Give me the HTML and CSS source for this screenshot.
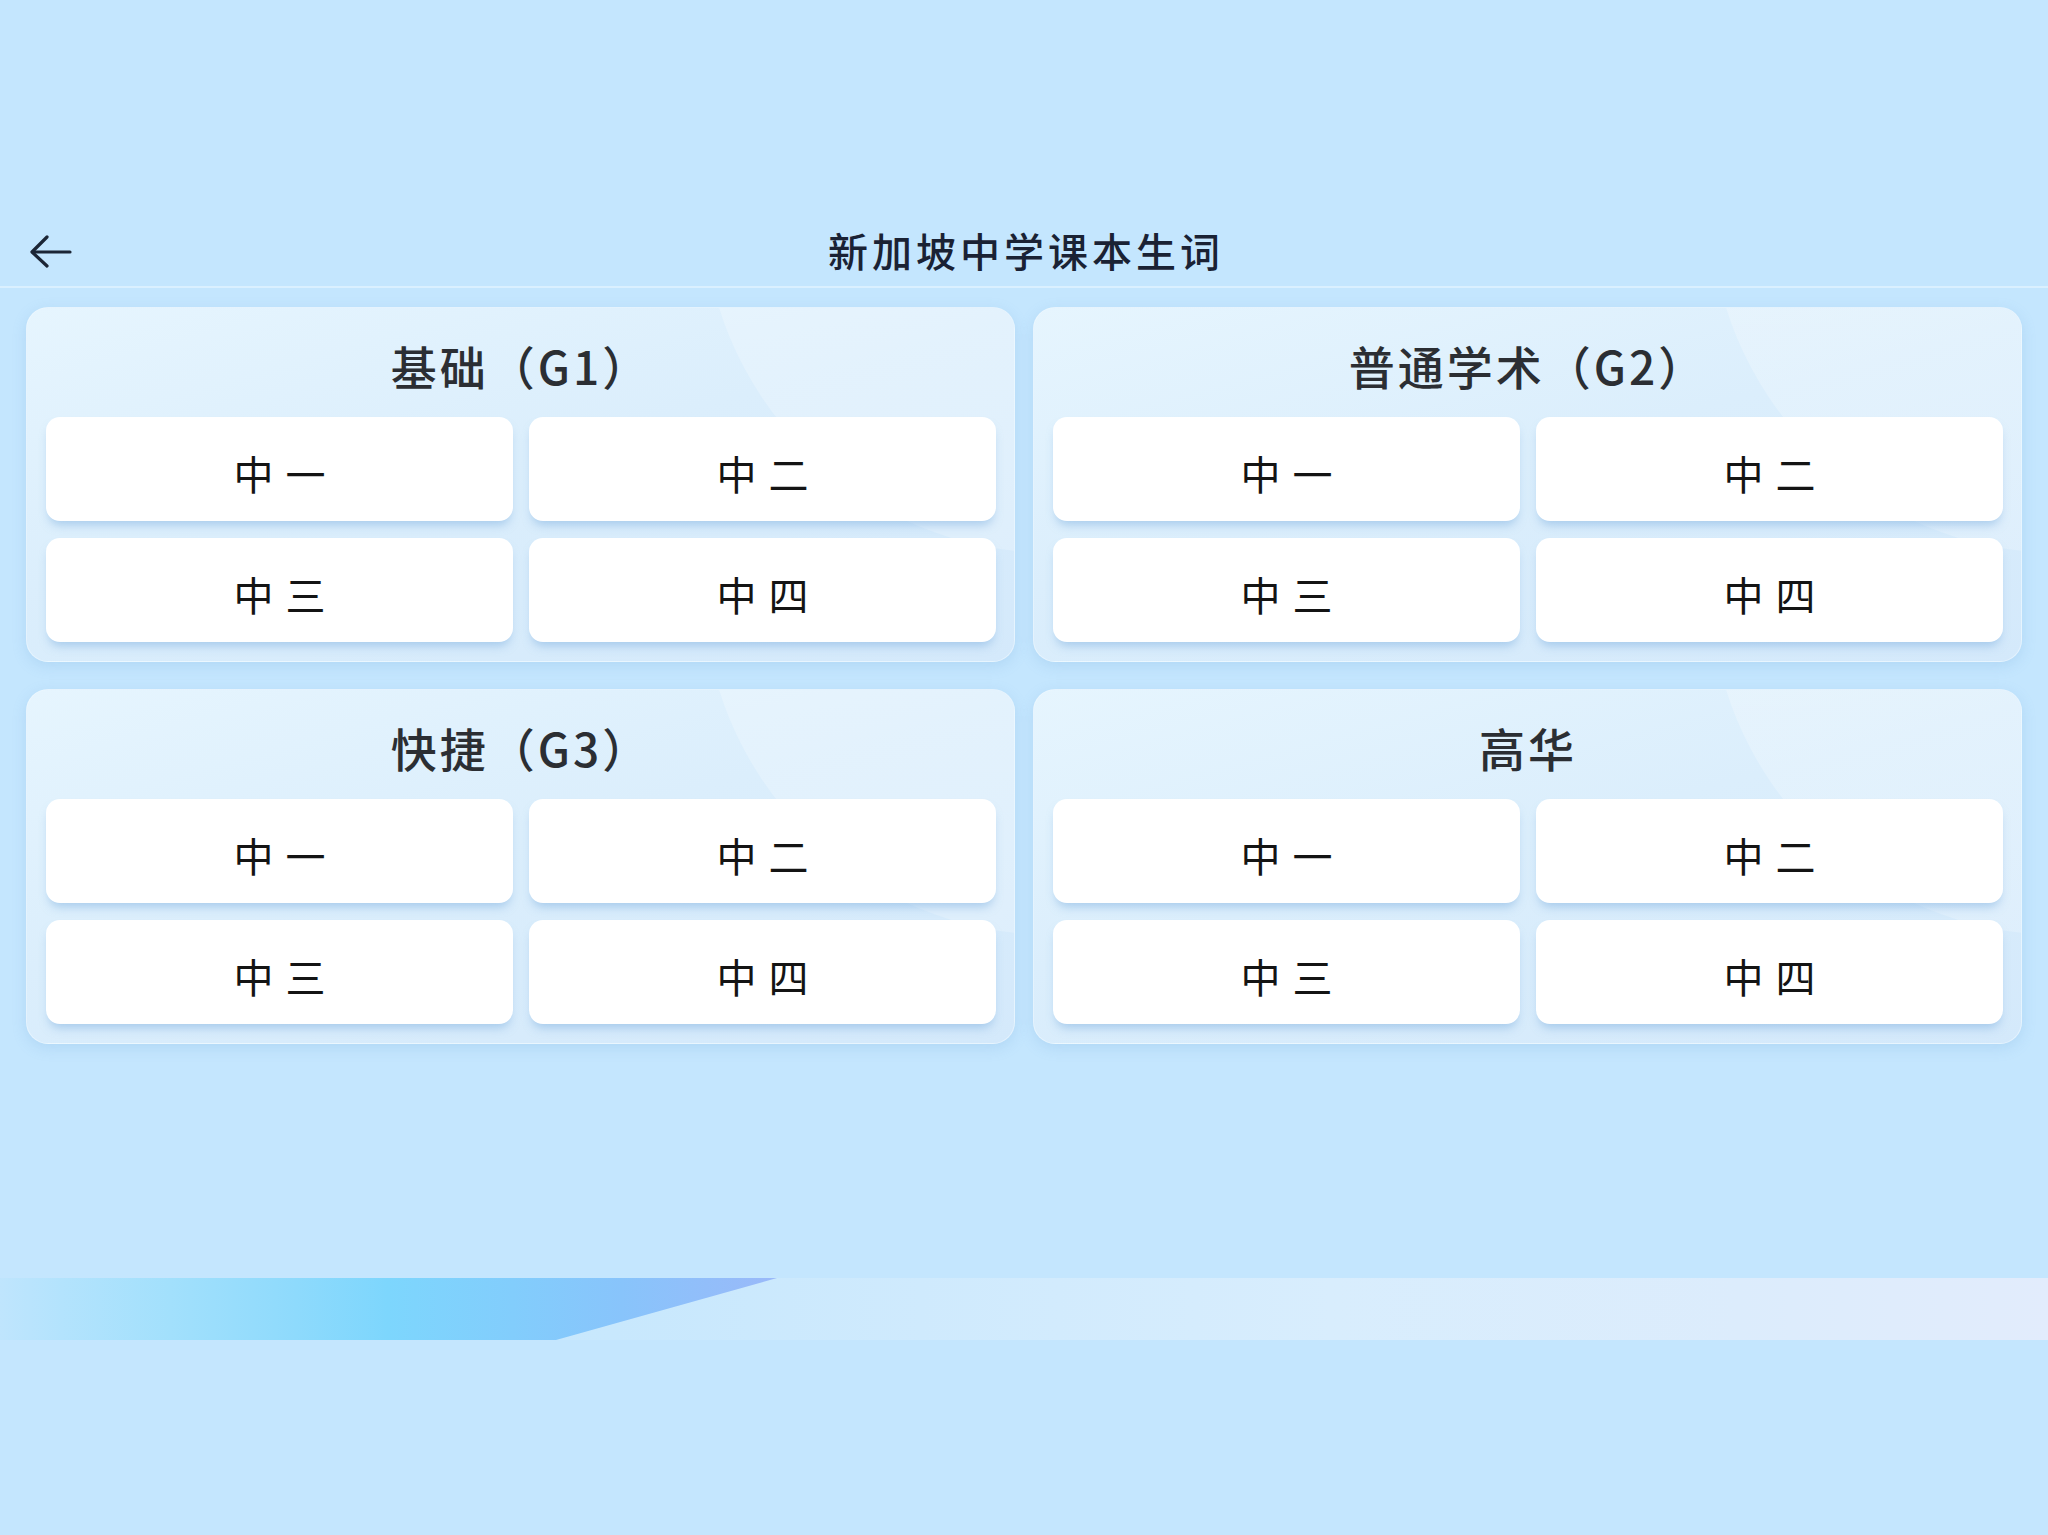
FILE: index.html
```html
<!DOCTYPE html>
<html lang="zh-CN">
<head>
<meta charset="utf-8">
<title>新加坡中学课本生词</title>
<link rel="stylesheet" href="styles.css">
</head>
<body>
<div class="page">
  <div class="topspace"></div>
  <header class="header">
    <div class="back">
      <svg class="back-icon" width="44" height="36" viewBox="0 0 44 36" fill="none" stroke="#1c2636" stroke-width="3.2" stroke-linecap="round" stroke-linejoin="round">
        <path d="M41 18 H4"/>
        <path d="M18 3 L3 18 L18 32"/>
      </svg>
    </div>
    <h1 class="title">新加坡中学课本生词</h1>
    <div class="spacer"></div>
  </header>

  <main class="grid">
    <section class="card">
      <h2 class="card-title">基础（G1）</h2>
      <div class="buttons">
        <div class="btn">中一</div>
        <div class="btn">中二</div>
        <div class="btn">中三</div>
        <div class="btn">中四</div>
      </div>
    </section>
    <section class="card">
      <h2 class="card-title">普通学术（G2）</h2>
      <div class="buttons">
        <div class="btn">中一</div>
        <div class="btn">中二</div>
        <div class="btn">中三</div>
        <div class="btn">中四</div>
      </div>
    </section>
    <section class="card">
      <h2 class="card-title">快捷（G3）</h2>
      <div class="buttons">
        <div class="btn">中一</div>
        <div class="btn">中二</div>
        <div class="btn">中三</div>
        <div class="btn">中四</div>
      </div>
    </section>
    <section class="card">
      <h2 class="card-title">高华</h2>
      <div class="buttons">
        <div class="btn">中一</div>
        <div class="btn">中二</div>
        <div class="btn">中三</div>
        <div class="btn">中四</div>
      </div>
    </section>
  </main>

  <div class="banner">
    <div class="banner-fill"></div>
  </div>
</div>
</body>
</html>
```

FILE: styles.css
```css
* { box-sizing: border-box; }

html, body {
  margin: 0;
  padding: 0;
}

body {
  width: 2048px;
  height: 1535px;
  overflow: hidden;
  background: #c4e6fe;
  font-family: "Noto Sans CJK SC", "Noto Sans", sans-serif;
  color: #1c2636;
}

.page {
  display: flex;
  flex-direction: column;
}

.topspace {
  height: 218px;
}

.header {
  height: 70px;
  display: grid;
  grid-template-columns: 200px 1fr 200px;
  align-items: center;
  border-bottom: 2px solid rgba(225, 243, 255, 0.75);
}

.back {
  display: flex;
  align-items: center;
  padding-left: 29px;
}

.back-icon {
  display: block;
}

.title {
  margin: 0;
  text-align: center;
  font-size: 40px;
  font-weight: 500;
  letter-spacing: 4px;
  padding-left: 4px;
  padding-bottom: 4px;
  line-height: 1;
  color: #1a2234;
}

.grid {
  display: grid;
  grid-template-columns: 1fr 1fr;
  column-gap: 18px;
  row-gap: 27px;
  padding: 19px 26px 0;
}

.card {
  position: relative;
  overflow: hidden;
  height: 355px;
  border-radius: 22px;
  padding: 0 18px 19px 19px;
  display: flex;
  flex-direction: column;
  background: linear-gradient(165deg, #e6f5fe 0%, #dbeefc 45%, #d4e9fb 100%);
  border: 1.5px solid rgba(240, 249, 255, 0.55);
  box-shadow: 0 4px 14px rgba(110, 165, 215, 0.22);
}

.card::before {
  content: "";
  position: absolute;
  left: 676px;
  top: -455px;
  width: 700px;
  height: 700px;
  border-radius: 50%;
  background: linear-gradient(180deg, rgba(255, 255, 255, 0.3), rgba(255, 255, 255, 0.2));
  pointer-events: none;
}

.card-title {
  position: relative;
  margin: 0;
  height: 112px;
  display: flex;
  align-items: center;
  justify-content: center;
  padding-top: 4px;
  font-size: 46px;
  font-weight: 500;
  letter-spacing: 3px;
  color: #2b2e33;
  line-height: 1;
}

.buttons {
  position: relative;
  display: grid;
  grid-template-columns: 1fr 1fr;
  grid-template-rows: 104px 104px;
  column-gap: 16px;
  row-gap: 17px;
}

.btn {
  display: flex;
  align-items: center;
  justify-content: center;
  background: #ffffff;
  border-radius: 14px;
  box-shadow: 0 7px 10px -3px rgba(120, 172, 222, 0.5);
  font-size: 40px;
  font-weight: 400;
  letter-spacing: 12px;
  padding-left: 12px;
  padding-top: 8px;
  color: #141414;
  line-height: 1;
}

.banner {
  position: relative;
  margin-top: 234px;
  height: 62px;
  background: linear-gradient(90deg, #c4e6fe 0%, #c8e8fd 30%, #cfeafd 45%, #d8edfd 65%, #dcecfc 85%, #e2ecfc 100%);
}

.banner-fill {
  width: 777px;
  height: 62px;
  clip-path: polygon(0 0, 100% 0, 556px 100%, 0 100%);
  background: linear-gradient(90deg, #bfe5fd 0%, #b3e3fd 8%, #a2e0fc 22%, #8edafc 38%, #7dd6fd 50%, #82cdfc 66%, #88c4fb 80%, #9ab9f9 100%);
}
```
